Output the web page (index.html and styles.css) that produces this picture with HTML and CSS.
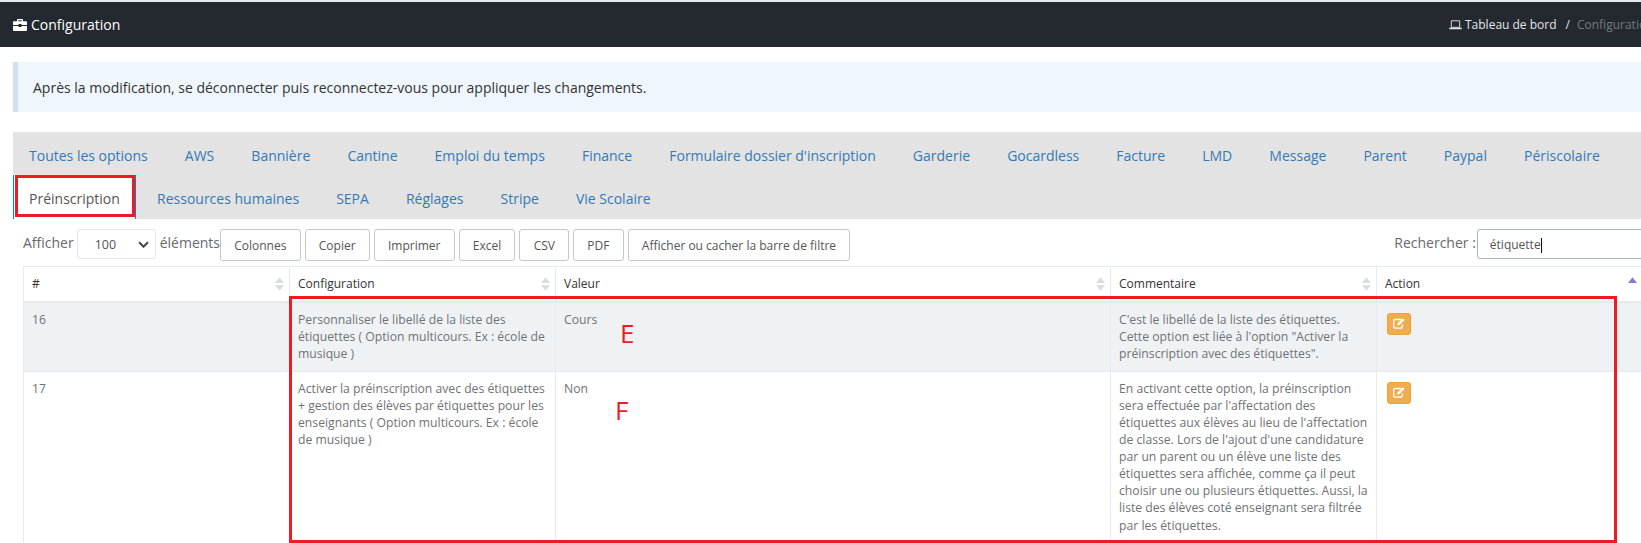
FILE: index.html
```html
<!DOCTYPE html>
<html lang="fr">
<head>
<meta charset="utf-8">
<title>Configuration</title>
<link rel="stylesheet" href="styles.css">
</head>
<body>
<header class="topbar">
  <div class="title">
    <svg class="brief" viewBox="0 0 14 12"><path d="M0 3.2C0 2.6.5 2.2 1 2.2h3V1C4 .5 4.5 0 5 0h4c.5 0 1 .5 1 1v1.200h3c.5 0 1 .4 1 1V6H8.500V5h-3v1H0zM5.200 1.200v1h3.600v-1z" fill-rule="evenodd"/><path d="M0 7h5.500v1h3V7H14v4c0 .6-.5 1-1 1H1c-.5 0-1-.4-1-1z"/></svg>
    <span>Configuration</span>
  </div>
  <nav class="crumbs">
    <svg class="laptop" viewBox="0 0 14 10"><path d="M2.500.5h9v7h-9z" fill="none" stroke="currentColor"/><path d="M0 8h14v.6c0 .4-.4.900-.8.900H.8C.4 9.500 0 9 0 8.600z" fill="currentColor"/></svg>
    <a class="crumb">Tableau de bord</a>
    <span class="sep">/</span>
    <span class="current">Configuration</span>
  </nav>
</header>
<main class="main">
  <div class="alert">Après la modification, se déconnecter puis reconnectez-vous pour appliquer les changements.</div>
  <ul class="tabs">
    <li class="tab">Toutes les options</li>
    <li class="tab">AWS</li>
    <li class="tab">Bannière</li>
    <li class="tab">Cantine</li>
    <li class="tab">Emploi du temps</li>
    <li class="tab">Finance</li>
    <li class="tab">Formulaire dossier d'inscription</li>
    <li class="tab">Garderie</li>
    <li class="tab">Gocardless</li>
    <li class="tab">Facture</li>
    <li class="tab">LMD</li>
    <li class="tab">Message</li>
    <li class="tab">Parent</li>
    <li class="tab">Paypal</li>
    <li class="tab">Périscolaire</li>
    <li class="break"></li>
    <li class="tab active">Préinscription</li>
    <li class="tab">Ressources humaines</li>
    <li class="tab">SEPA</li>
    <li class="tab">Réglages</li>
    <li class="tab">Stripe</li>
    <li class="tab">Vie Scolaire</li>
  </ul>
  <div class="toolbar">
    <div class="length">
      <span class="lbl">Afficher</span>
      <span class="select">100<svg class="chev" viewBox="0 0 10 6"><path d="M1 1l4 4 4-4" fill="none" stroke="currentColor" stroke-width="1.800"/></svg></span>
      <span class="lbl">éléments</span>
    </div>
    <div class="buttons">
      <button class="btn">Colonnes</button>
      <button class="btn">Copier</button>
      <button class="btn">Imprimer</button>
      <button class="btn">Excel</button>
      <button class="btn">CSV</button>
      <button class="btn">PDF</button>
      <button class="btn">Afficher ou cacher la barre de filtre</button>
    </div>
    <div class="search">
      <span class="lbl">Rechercher :</span>
      <span class="input">étiquette<i class="caret"></i></span>
    </div>
  </div>
  <table class="grid">
    <colgroup><col class="c1"><col class="c2"><col class="c3"><col class="c4"><col class="c5"></colgroup>
    <thead>
      <tr>
        <th><div class="th">#<svg class="sort" viewBox="0 0 8 12"><path d="M4 0l4 5H0zM4 12L0 7h8z"/></svg></div></th>
        <th><div class="th">Configuration<svg class="sort" viewBox="0 0 8 12"><path d="M4 0l4 5H0zM4 12L0 7h8z"/></svg></div></th>
        <th><div class="th">Valeur<svg class="sort" viewBox="0 0 8 12"><path d="M4 0l4 5H0zM4 12L0 7h8z"/></svg></div></th>
        <th><div class="th">Commentaire<svg class="sort" viewBox="0 0 8 12"><path d="M4 0l4 5H0zM4 12L0 7h8z"/></svg></div></th>
        <th><div class="th">Action<svg class="sort on" viewBox="0 0 8 12"><path d="M4 0l4 5H0z"/></svg></div></th>
      </tr>
    </thead>
    <tbody>
      <tr class="odd">
        <td>16</td>
        <td>Personnaliser le libellé de la liste des étiquettes ( Option multicours. Ex : école de musique )</td>
        <td>Cours</td>
        <td>C'est le libellé de la liste des étiquettes. Cette option est liée à l'option "Activer la préinscription avec des étiquettes".</td>
        <td><button class="edit"><svg viewBox="0 0 12 11"><path d="M8 1.500H2C1.200 1.500.7 2 .7 2.800v6c0 .8.500 1.400 1.300 1.400h6c.8 0 1.300-.6 1.300-1.400V6.500" fill="none" stroke="#fff" stroke-width="1.300"/><path d="M9.800.3l1.700 1.700-5 5-2.300.6.600-2.300z" fill="#fff"/></svg></button></td>
      </tr>
      <tr>
        <td>17</td>
        <td>Activer la préinscription avec des étiquettes + gestion des élèves par étiquettes pour les enseignants ( Option multicours. Ex : école de musique )</td>
        <td>Non</td>
        <td>En activant cette option, la préinscription sera effectuée par l'affectation des étiquettes aux élèves au lieu de l'affectation de classe. Lors de l'ajout d'une candidature par un parent ou un élève une liste des étiquettes sera affichée, comme ça il peut choisir une ou plusieurs étiquettes. Aussi, la liste des élèves coté enseignant sera filtrée par les étiquettes.</td>
        <td><button class="edit"><svg viewBox="0 0 12 11"><path d="M8 1.500H2C1.200 1.500.7 2 .7 2.800v6c0 .8.500 1.400 1.300 1.400h6c.8 0 1.300-.6 1.300-1.400V6.500" fill="none" stroke="#fff" stroke-width="1.300"/><path d="M9.800.3l1.700 1.700-5 5-2.300.6.600-2.300z" fill="#fff"/></svg></button></td>
      </tr>
    </tbody>
  </table>
</main>
<div class="mark-box"></div>
<span class="mark-letter mark-e">E</span>
<span class="mark-letter mark-f">F</span>
</body>
</html>
```
FILE: styles.css
```css
* { box-sizing: border-box; }
html, body { margin: 0; padding: 0; height: 543px; overflow: hidden; background: #fff; }
body { position: relative; width: 1641px; font-family: "Open Sans", sans-serif; font-size: 12px; color: #676a6c; }

.topbar { margin-top: 2px; height: 45px; background: #24282f; display: flex; justify-content: space-between; align-items: center; box-shadow: 0 -2px 0 #e6e8ee; white-space: nowrap; padding-left: 13px; overflow: hidden; }
.title { display: flex; align-items: center; gap: 4px; color: #fff; font-size: 14px; }
.brief { width: 14px; height: 12px; fill: #fff; flex: none; }
.crumbs { display: flex; align-items: center; width: 192px; flex: none; font-size: 12px; color: #e4e6ea; }
.laptop { width: 13px; height: 10px; margin-right: 3px; flex: none; }
.crumb, .sep, .current { flex: none; }
.sep { margin: 0 7px 0 9px; }
.current { color: #777a7f; }

.main { padding: 15px 0 0 13px; width: 1680px; }
.alert { height: 50px; width: 1667px; background: #eff6fd; border-left: 5px solid #cfe2f3; padding-left: 15px; display: flex; align-items: center; font-size: 14px; color: #333; }

.tabs { list-style: none; margin: 20px 0 0; padding: 0; height: 87px; background: #e3e3e3; display: flex; flex-wrap: wrap; align-content: flex-start; }
.tab { height: 43px; padding: 0 16px; margin-right: 5.050px; line-height: 48px; font-size: 14px; color: #337ab7; white-space: nowrap; }
.break { flex-basis: 100%; height: 0; }
.tab.active { position: relative; height: 44px; width: 123px; padding: 0 15px; background: #fff; color: #555; line-height: 47px; border: solid #0a84c8; border-width: 0 1px; }
.tab.active::after { content: ""; position: absolute; left: 1px; right: 0; top: 0; bottom: 2px; border: 3px solid #ed1c24; }

.toolbar { display: flex; align-items: flex-start; height: 47px; padding: 10px 0 0 10px; position: relative; }
.length { display: flex; align-items: flex-start; }
.lbl { font-size: 14px; color: #676a6c; line-height: 28px; }
.select { width: 79px; height: 30px; margin: 0 4px 0 3px; border: 1px solid #e5e6e7; border-radius: 3px; padding: 0 6px 0 17px; display: flex; justify-content: space-between; align-items: center; font-size: 12.500px; color: #555; }
.chev { width: 11px; height: 7px; color: #444; }
.buttons { display: flex; gap: 4px; }
.btn { height: 32px; padding: 0 13.200px; background: #fff; border: 1px solid #c4c7cc; border-radius: 3px; font: 12px "Open Sans", sans-serif; color: #555; white-space: nowrap; }
.search { margin-left: 544px; display: flex; align-items: flex-start; flex: none; }
.input { width: 200px; height: 30px; margin-left: 1px; border: 1px solid #a9b4c0; border-radius: 3px; padding-left: 12px; font-size: 12px; color: #555; line-height: 29px; }
.caret { display: inline-block; width: 1px; height: 15px; background: #111; vertical-align: middle; }

.grid { margin: 0 0 0 10px; width: 1619px; table-layout: fixed; border-collapse: collapse; }
.c1, .c2, .c4, .c5 { width: 266px; }
.c3 { width: 555px; }
.grid th, .grid td { border: 1px solid #e7eaec; vertical-align: top; }
.grid th { height: 35px; padding: 0 5px 0 8px; border-bottom-width: 2px; font-weight: 400; font-size: 12px; color: #333; vertical-align: middle; }
.th { display: flex; justify-content: space-between; align-items: center; width: 100%; }
.sort { width: 9px; height: 14px; fill: #dadcde; }
.sort.on { fill: #7b7ed6; }
.grid td { padding: 8px 8px 10px; line-height: 17.100px; font-size: 12.200px; color: #6f7274; }
.grid .odd td { padding-bottom: 9px; background: #eff2f5; }
.edit { display: block; width: 24px; height: 22px; margin: 2px 0 0 2px; padding: 0; background: #f0ad4e; border: 1px solid #eea236; border-radius: 3px; }
.edit svg { display: block; width: 12px; height: 11px; margin: 0 auto; }

.mark-box { position: absolute; left: 289px; top: 296px; width: 1328px; height: 247px; border: 3px solid #ed1c24; pointer-events: none; }
.mark-letter { position: absolute; font: 26px/1 "Open Sans", sans-serif; color: #ed1c24; }
.mark-e { left: 620px; top: 320px; }
.mark-f { left: 615px; top: 397px; }
```
